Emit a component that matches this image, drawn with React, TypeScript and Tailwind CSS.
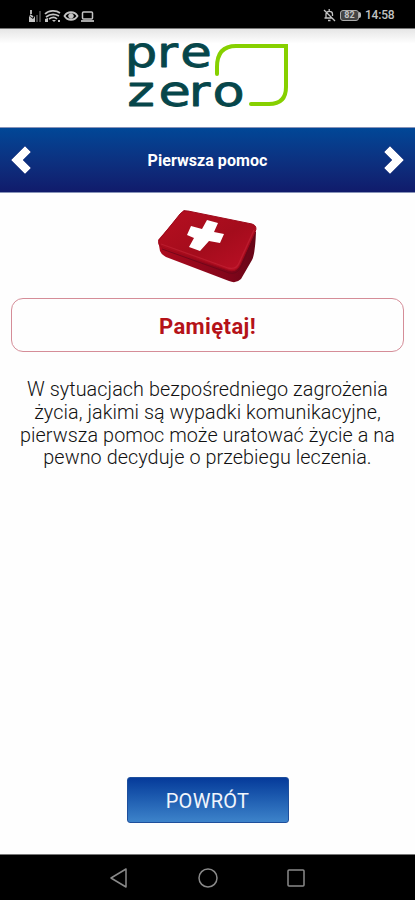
function StatusBar() {
  return (
    <header className="flex h-[29px] shrink-0 items-center justify-between border-b border-[#777] bg-black pl-[28px] pr-[21px] pt-[2px] text-[#c4c4c4]">
      <svg width="68" height="15" viewBox="0 0 68 15" fill="none" stroke="currentColor">
        {/* Signal */}
        <path d="M1 14V8L5 11L7 8V14Z" fill="currentColor" stroke="none" />
        <path d="M3 2V6M2 7L5 9" strokeWidth="1.8" />
        <path d="M8 14V7H10V14ZM11 14V3H13V14Z" fill="#444" stroke="none" />
        {/* Wifi */}
        <path d="M17 6C21 2 28 2 32 5M18 9C22 6 27 6 31 8M21 11C24 9 27 9 29 11" strokeWidth="1.7" />
        <path d="M24 12H28L26 14ZM17 11L20 10V14H17ZM30 12H32V14H30Z" fill="currentColor" stroke="none" />
        {/* Eye */}
        <path d="M36.5 8C39.5 3 46.5 3 49.5 8C46.5 13 39.5 13 36.5 8Z" strokeWidth="1.8" />
        <circle cx="43" cy="8" r="2.3" fill="currentColor" />
        {/* Laptop */}
        <rect x="54.5" y="4" width="10" height="7" rx="1" strokeWidth="1.5" />
        <path d="M53 13H66" strokeWidth="1.7" />
      </svg>
      <div className="flex items-center">
        <svg className="mr-[4px]" width="13" height="14" viewBox="0 0 13 14" fill="none" stroke="currentColor" strokeWidth="1.3">
          <path d="M3 9.5V6C3 2.5 9.5 2.5 9.5 6V8M3 10H9M1.5 10H3M5 12.5H7.5M1 2L12 13M6.2 1V3" />
        </svg>
        <div className="flex h-[11px] w-[19px] items-center justify-center rounded-[3px] border border-[#aaa] bg-[#444] text-[9px] leading-none font-bold">82</div>
        <div className="mr-[4px] h-[6px] w-[2px] rounded-r bg-[#bbb]" />
        <span className="w-[29px] text-[12px] leading-none font-medium tracking-[-0.2px]">14:58</span>
      </div>
    </header>
  )
}

function Logo() {
  return (
    <svg className="mx-auto" width="175" height="97" viewBox="120 29 175 97" aria-label="pre zero">
      <g
        fill="#06464a"
        stroke="#06464a"
        strokeWidth="0.8"
        strokeLinejoin="round"
        fontFamily="'DejaVu Sans', sans-serif"
      >
        <text transform="scale(1.22 1)" x="102.2 128.7 147.7" y="67.5" fontSize="42">pre</text>
        <text transform="scale(1.25 1)" x="101.8 126.8 151 170" y="106.5" fontSize="42">zero</text>
      </g>
      <path
        d="M217 74V67Q217 46 236 46H286V87Q286 104 269 104H251"
        fill="none"
        stroke="#86d000"
        strokeWidth="4"
        strokeLinecap="round"
      />
    </svg>
  )
}

function Chevron({ flip = false }: { flip?: boolean }) {
  return (
    <svg className={flip ? 'rotate-180' : ''} width="22" height="30" viewBox="0 0 22 30">
      <path d="M15 1L21 7L13 15L21 23L15 29L1 15Z" fill="white" stroke="#142878" strokeWidth="0.5" />
    </svg>
  )
}

function FirstAidKit() {
  return (
    <svg className="mx-auto" width="102" height="76" viewBox="157 208 102 76">
      <defs>
        <linearGradient id="lid" x1="0" y1="0" x2="1" y2="1">
          <stop offset="0" stopColor="#b60f20" />
          <stop offset="0.55" stopColor="#a40c1c" />
          <stop offset="1" stopColor="#bd1026" />
        </linearGradient>
        <linearGradient id="side" x1="0" y1="0" x2="1" y2="0">
          <stop offset="0" stopColor="#ad0b1e" />
          <stop offset="0.75" stopColor="#80051a" />
          <stop offset="1" stopColor="#650617" />
        </linearGradient>
      </defs>
      <path d="M158 240L160 251Q161 254 166 257L229 281Q236 284 241 279L252 260Q255 255 256 232L184 210Z" fill="url(#side)" />
      <path d="M160 239L180 214Q183 210 188 211L252 224Q258 226 255 232L240 265Q236 273 228 270L164 248Q156 245 160 239Z" fill="url(#lid)" stroke="#9f0a1b" />
      <path d="M161 244L228 268Q236 270 239 263L254 230" fill="none" stroke="#c82a3c" strokeWidth="1.3" opacity="0.5" />
      <path d="M162 249L229 273Q237 275 241 267L254 237" fill="none" stroke="#680719" strokeWidth="0.8" />
      <path d="M207 220L218 223L214 232L224 234L220 243L209 241L200 251L189 247L194 238L187 235L191 226L202 229Z" fill="white" />
    </svg>
  )
}

export default function App() {
  return (
    <div className="flex h-[900px] w-[415px] flex-col overflow-hidden bg-white font-['Roboto',sans-serif]">
      <StatusBar />
      <div className="h-[98px] shrink-0 bg-linear-to-b from-[#e6e6e6] via-white via-15% to-white">
        <Logo />
      </div>
      <nav className="flex h-[66px] shrink-0 items-center justify-between border-y border-[#8793b8] bg-linear-to-b from-[#004797] to-[#101b6b] px-[10px] text-white">
        <Chevron />
        <h1 className="pt-[2px] text-[16px] font-bold tracking-[0.05px]">Pierwsza pomoc</h1>
        <Chevron flip />
      </nav>

      <main className="flex flex-1 flex-col bg-[#fefefe] px-[11px] pt-[15px]">
        <FirstAidKit />
        <h2 className="mt-[14px] flex h-[54px] shrink-0 items-center justify-center rounded-[12px] border border-[#d58d98] pt-[2px] text-[22px] font-bold tracking-[0.4px] text-[#b51218]">
          Pamiętaj!
        </h2>
        <p className="mt-[27px] text-center text-[19.8px] leading-[22.8px] font-light tracking-[0.07px] whitespace-nowrap text-[#111]">
          W sytuacjach bezpośredniego zagrożenia<br />
          życia, jakimi są wypadki komunikacyjne,<br />
          pierwsza pomoc może uratować życie a na<br />
          pewno decyduje o przebiegu leczenia.
        </p>
        <button className="mx-auto mt-auto mb-[31px] flex h-[46px] w-[162px] items-center justify-center rounded-[3px] border border-[#1e4f9c] bg-linear-to-b from-[#063a9a] to-[#3d83ca] pt-[2px] text-[20px] tracking-[0.3px] text-[#f1f5fc]">
          POWRÓT
        </button>
      </main>

      <footer className="flex h-[46px] shrink-0 items-center justify-between border-t border-[#777] bg-black px-[109px]">
        <svg width="20" height="22" viewBox="0 0 20 22" fill="none" stroke="#8a8a8a" strokeWidth="1.5"><path d="M17 2V20L2 11Z" strokeLinejoin="round" /></svg>
        <svg width="22" height="22" viewBox="0 0 22 22" fill="none" stroke="#8a8a8a" strokeWidth="1.5"><circle cx="11" cy="11" r="9" /></svg>
        <svg width="20" height="22" viewBox="0 0 20 22" fill="none" stroke="#8a8a8a" strokeWidth="1.5"><rect x="2" y="3" width="16" height="16" rx="1" /></svg>
      </footer>
    </div>
  )
}
